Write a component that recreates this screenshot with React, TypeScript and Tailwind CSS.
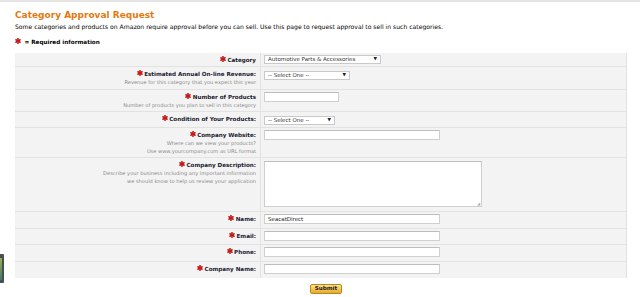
import React from "react";

type Row = {
  label: string;
  help?: string[];
  h: string;
  control: React.ReactNode;
};

function Star() {
  return (
    <svg width="6" height="6" viewBox="0 0 10 10" className="inline-block mr-[1.5px] -mt-[3px] align-middle">
      <g stroke="#c41a1a" strokeWidth="2.6" strokeLinecap="round">
        <line x1="5" y1="1" x2="5" y2="9" />
        <line x1="1.5" y1="3" x2="8.5" y2="7" />
        <line x1="1.5" y1="7" x2="8.5" y2="3" />
      </g>
    </svg>
  );
}

function Select({ w, value }: { w: string; value: string }) {
  return (
    <div className={`${w} h-[9px] bg-white border border-[#c9c9c9] flex items-center justify-between pl-[3px] pr-[3px] text-[5.5px] text-[#333]`}>
      <span className="leading-none">{value}</span>
      <span className="text-[4.5px] leading-none text-[#222]">▼</span>
    </div>
  );
}

function Input({ w, value }: { w: string; value?: string }) {
  return (
    <div className={`${w} h-[10px] bg-white border border-[#cfcfcf] border-t-[#bdbdbd] flex items-center pl-[3px] text-[5.5px] text-[#222]`}>
      {value}
    </div>
  );
}

const rows: Row[] = [
  { label: "Category", h: "h-[14px]", control: <Select w="w-[117px]" value="Automotive Parts & Accessories" /> },
  {
    label: "Estimated Annual On-line Revenue:",
    help: ["Revenue for this category that you expect this year"],
    h: "h-[23px]",
    control: <div className="pt-[2px]"><Select w="w-[86px]" value="-- Select One --" /></div>,
  },
  {
    label: "Number of Products",
    help: ["Number of products you plan to sell in this category"],
    h: "h-[22px]",
    control: <Input w="w-[75px]" />,
  },
  { label: "Condition of Your Products:", h: "h-[16px]", control: <div className="pt-[2px]"><Select w="w-[71px]" value="-- Select One --" /></div> },
  {
    label: "Company Website:",
    help: ["Where can we view your products?", "Use www.yourcompany.com as URL format"],
    h: "h-[30px]",
    control: <Input w="w-[176px]" />,
  },
  {
    label: "Company Description:",
    help: ["Describe your business including any important information", "we should know to help us review your application"],
    h: "h-[54px]",
    control: (
      <div className="mt-[1px] w-[218px] h-[46px] bg-white border border-[#cfcfcf] border-t-[#bdbdbd] relative">
        <span className="absolute right-[1px] bottom-[0px] text-[4px] leading-none text-[#aaa]">◢</span>
      </div>
    ),
  },
  { label: "Name:", h: "h-[17px]", control: <Input w="w-[176px]" value="SeacatDirect" /> },
  { label: "Email:", h: "h-[16px]", control: <Input w="w-[176px]" /> },
  { label: "Phone:", h: "h-[17px]", control: <Input w="w-[176px]" /> },
  { label: "Company Name:", h: "h-[16px]", control: <Input w="w-[176px]" /> },
];

export default function App() {
  return (
    <div className="relative w-[640px] h-[297px] bg-white border-t-2 border-[#e4e4e4] overflow-hidden" style={{ fontFamily: '"DejaVu Sans", Verdana, sans-serif' }}>
      <div className="pl-[15px] pt-[7px]">
        <h1 className="text-[9px] leading-[12px] font-bold text-[#e47911]">Category Approval Request</h1>
        <p className="mt-[2px] text-[6.1px] leading-[8px] text-[#000]">
          Some categories and products on Amazon require approval before you can sell. Use this page to request approval to sell in such categories.
        </p>
        <p className="mt-[7px] text-[5.7px] leading-[9px] font-bold text-[#000]">
          <Star /> = Required information
        </p>
      </div>

      <div className="ml-[15px] mt-[6px] w-[612px] bg-[#f3f3f3] border-r border-[#e2e2e2]">
        {rows.map((r) => (
          <div key={r.label} className={`flex ${r.h} border-b border-[#e2e2e2] last:border-b-0`}>
            <div className="w-[246px] shrink-0 border-r border-[#e2e2e2] pr-[4px] pt-[3px] text-right">
              <div className="text-[5.6px] leading-[9px] font-bold text-[#1a1a2e]">
                <Star />
                {r.label}
              </div>
              {r.help?.map((t) => (
                <div key={t} className="text-[5.1px] leading-[7.5px] text-[#8a8a8a]">
                  {t}
                </div>
              ))}
            </div>
            <div className="pl-[3px] pt-[2px]">{r.control}</div>
          </div>
        ))}
      </div>

      <div className="flex pl-[310px] pt-[6px]">
        <button className="w-[32px] h-[10px] rounded-[2px] border border-[#b7891c] bg-gradient-to-b from-[#fbe08a] to-[#e9a922] text-[5.6px] leading-none font-bold text-[#1d1d1d]">
          Submit
        </button>
      </div>

      <div className="absolute left-0 top-[252px] w-[4px] h-[29px] rounded-r-[1px] bg-[#4a4f55] flex items-center">
        <div className="w-[2px] h-[22px] bg-gradient-to-b from-[#9bb04a] to-[#3e7a6a]" />
      </div>
    </div>
  );
}
